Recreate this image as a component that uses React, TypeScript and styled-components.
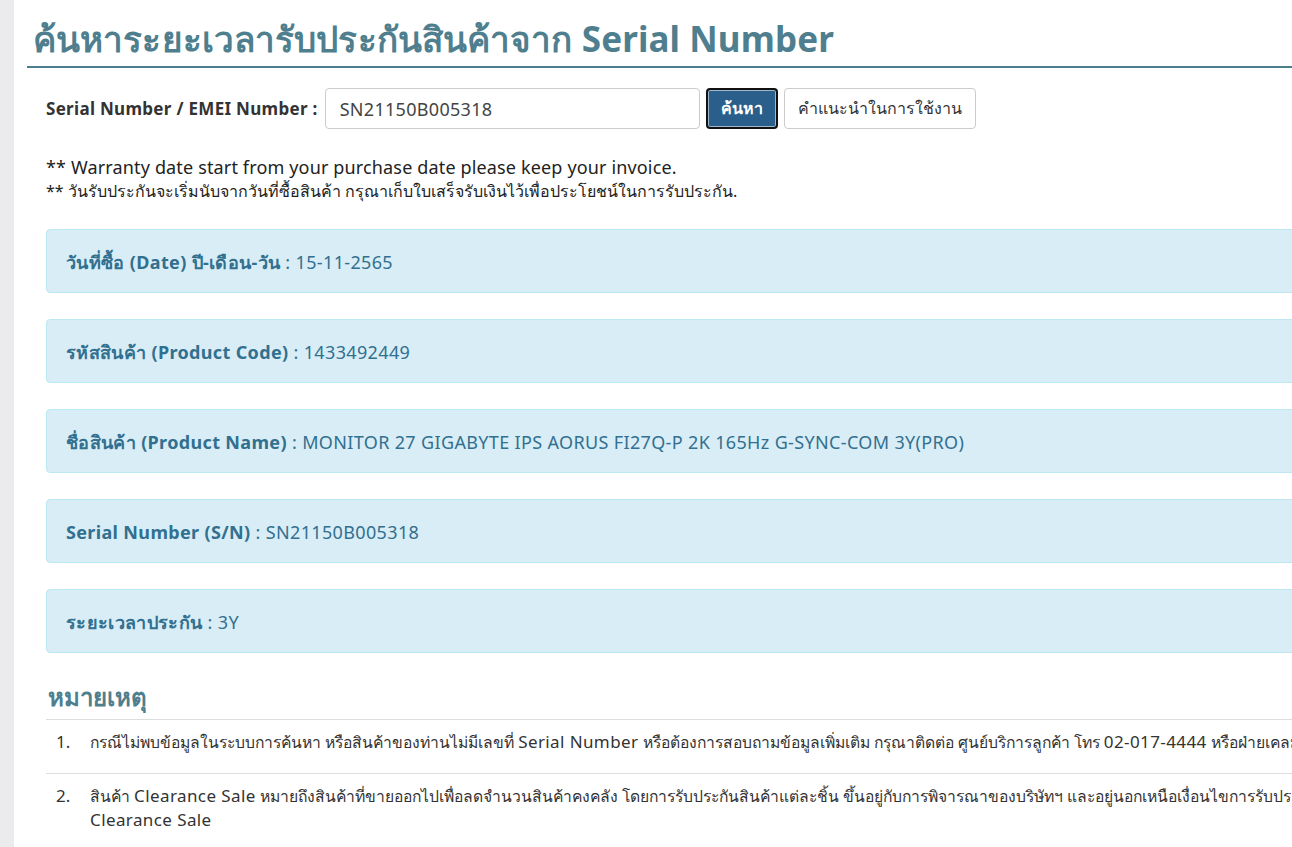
import React from "react";
import styled, { createGlobalStyle } from "styled-components";

const GlobalStyle = createGlobalStyle`
  html, body {
    margin: 0;
    padding: 0;
    background: #fff;
    overflow: hidden;
  }
  body {
    font-family: "Noto Sans", "Open Sans", sans-serif;
    color: #333;
  }
`;

type InfoRow = {
  label: string;
  value: string;
};

const rows: InfoRow[] = [
  { label: "วันที่ซื้อ (Date) ปี-เดือน-วัน", value: "15-11-2565" },
  { label: "รหัสสินค้า (Product Code)", value: "1433492449" },
  {
    label: "ชื่อสินค้า (Product Name)",
    value: "MONITOR 27 GIGABYTE IPS AORUS FI27Q-P 2K 165Hz G-SYNC-COM 3Y(PRO)",
  },
  { label: "Serial Number (S/N)", value: "SN21150B005318" },
  { label: "ระยะเวลาประกัน", value: "3Y" },
];

const App = () => {
  return (
    <Page>
      <GlobalStyle />
      <SideStrip />
      <Main>
        <Title>ค้นหาระยะเวลารับประกันสินค้าจาก Serial Number</Title>
        <Content>
          <SearchRow>
            <SearchLabel>Serial Number / EMEI Number :</SearchLabel>
            <SearchInput type="text" defaultValue="SN21150B005318" />
            <Button $primary>ค้นหา</Button>
            <Button>คำแนะนำในการใช้งาน</Button>
          </SearchRow>

          <Notes>
            <NoteEn>** Warranty date start from your purchase date please keep your invoice.</NoteEn>
            <NoteTh>** วันรับประกันจะเริ่มนับจากวันที่ซื้อสินค้า กรุณาเก็บใบเสร็จรับเงินไว้เพื่อประโยชน์ในการรับประกัน.</NoteTh>
          </Notes>

          <Alerts>
            {rows.map((row) => (
              <Alert key={row.label}>
                <strong>{row.label}</strong> : {row.value}
              </Alert>
            ))}
          </Alerts>

          <Remark>หมายเหตุ</Remark>
          <RemarkTable>
            <tbody>
              <tr>
                <NumCell>1.</NumCell>
                <TextCell>
                  กรณีไม่พบข้อมูลในระบบการค้นหา หรือสินค้าของท่านไม่มีเลขที่ <Latin>Serial Number</Latin>{" "}
                  หรือต้องการสอบถามข้อมูลเพิ่มเติม กรุณาติดต่อ ศูนย์บริการลูกค้า โทร <Latin>02-017-4444</Latin>{" "}
                  หรือฝ่ายเคลมสินค้า
                </TextCell>
              </tr>
              <tr>
                <NumCell>2.</NumCell>
                <TextCell>
                  สินค้า <Latin>Clearance Sale</Latin> หมายถึงสินค้าที่ขายออกไปเพื่อลดจำนวนสินค้าคงคลัง
                  โดยการรับประกันสินค้าแต่ละชิ้น ขึ้นอยู่กับการพิจารณาของบริษัทฯ และอยู่นอกเหนือเงื่อนไขการรับประกันสินค้า
                  <br />
                  <Latin>Clearance Sale</Latin>
                </TextCell>
              </tr>
            </tbody>
          </RemarkTable>
        </Content>
      </Main>
    </Page>
  );
};

export default App;

const Page = styled.div`
  display: flex;
  min-height: 847px;
  width: 1800px;
`;

const SideStrip = styled.div`
  width: 14px;
  flex: none;
  background: #ebebee;
`;

const Main = styled.div`
  width: 1700px;
  padding-top: 17px;
`;

const Title = styled.h1`
  margin: 0 0 0 13px;
  padding: 0 0 6px 6px;
  font-size: 35px;
  line-height: 43px;
  font-weight: 700;
  letter-spacing: 0.1px;
  color: #4f7f8f;
  border-bottom: 2px solid #4b7d8c;
`;

const Content = styled.div`
  padding: 20px 0 0 32px;
`;

const SearchRow = styled.div`
  display: flex;
  align-items: center;
  gap: 6px;
`;

const SearchLabel = styled.label`
  font-size: 17px;
  font-weight: 700;
  letter-spacing: 0.3px;
  color: #333;
  margin-right: 1px;
`;

const SearchInput = styled.input`
  box-sizing: border-box;
  width: 375px;
  height: 41px;
  padding: 0 14px;
  font-family: inherit;
  font-size: 18px;
  letter-spacing: 0.3px;
  color: #444;
  border: 1px solid #ccc;
  border-radius: 4px;
  outline: none;
`;

const Button = styled.button<{ $primary?: boolean }>`
  box-sizing: border-box;
  height: 41px;
  padding: 0 13px;
  font-family: inherit;
  font-size: 16px;
  font-weight: ${(p) => (p.$primary ? 700 : 400)};
  color: ${(p) => (p.$primary ? "#fff" : "#333")};
  background: ${(p) => (p.$primary ? "#2a5f8c" : "#fff")};
  border: ${(p) => (p.$primary ? "2px solid #111" : "1px solid #ccc")};
  border-radius: 4px;
  box-shadow: ${(p) => (p.$primary ? "inset 0 0 0 1px #9fb7cc" : "none")};
`;

const Notes = styled.div`
  margin-top: 26px;
`;

const NoteEn = styled.div`
  font-size: 18px;
  line-height: 24px;
  letter-spacing: 0.15px;
  color: #222;
`;

const NoteTh = styled.div`
  font-size: 16px;
  line-height: 24px;
  color: #222;
`;

const Alerts = styled.div`
  display: flex;
  flex-direction: column;
  gap: 26px;
  margin-top: 26px;
`;

const Alert = styled.div`
  box-sizing: border-box;
  height: 64px;
  display: flex;
  align-items: center;
  padding: 2px 19px 0;
  font-size: 18px;
  letter-spacing: 0.35px;
  color: #31708f;
  background: #d9edf7;
  border: 1px solid #bce8f1;
  border-radius: 4px;
  white-space: pre;

  strong {
    font-weight: 700;
  }
`;

const Remark = styled.h3`
  margin: 27px 0 0 2px;
  font-size: 24px;
  line-height: 34px;
  font-weight: 700;
  color: #4f7f8f;
`;

const RemarkTable = styled.table`
  margin-top: 5px;
  width: 1600px;
  border-collapse: collapse;
`;

const NumCell = styled.td`
  width: 34px;
  padding: 10px 0 0 10px;
  vertical-align: top;
  font-size: 17px;
  line-height: 24px;
  color: #333;
  border-top: 1px solid #ddd;
`;

const TextCell = styled.td`
  padding: 10px 0 19px 0;
  vertical-align: top;
  font-size: 15.7px;
  line-height: 24px;
  color: #333;
  border-top: 1px solid #ddd;
`;

const Latin = styled.span`
  font-size: 17px;
  line-height: 1;
  letter-spacing: 0.4px;
`;
